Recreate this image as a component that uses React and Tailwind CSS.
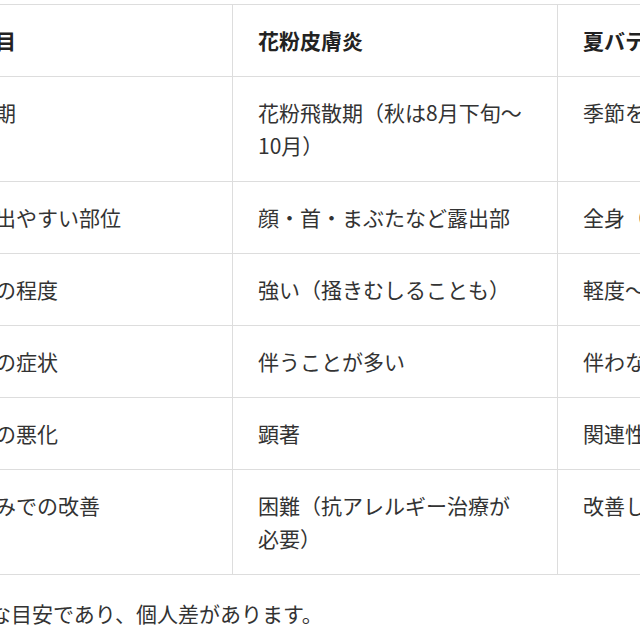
import React from "react";

const rows = [
  {
    item: "発症時期",
    pollen: "花粉飛散期（秋は8月下旬～10月）",
    summer: "季節を問わず（特に夏）",
  },
  {
    item: "症状が出やすい部位",
    pollen: "顔・首・まぶたなど露出部",
    summer: "全身（特に汗をかく部位）",
  },
  {
    item: "かゆみの程度",
    pollen: "強い（掻きむしることも）",
    summer: "軽度～中等度",
  },
  {
    item: "その他の症状",
    pollen: "伴うことが多い",
    summer: "伴わないことが多い",
  },
  {
    item: "外出後の悪化",
    pollen: "顕著",
    summer: "関連性は低い",
  },
  {
    item: "休養のみでの改善",
    pollen: "困難（抗アレルギー治療が必要）",
    summer: "改善しやすい",
  },
];

const cell =
  "border border-[#dddddd] pl-[25px] pr-[30px] py-[19px] align-top text-left";

const App = () => {
  return (
    <div
      className="w-[640px] h-[640px] overflow-hidden bg-white text-[#333333] text-[21px] leading-[33px]"
      style={{ fontFamily: '"Noto Sans CJK JP", "Noto Sans", sans-serif' }}
    >
      <div className="ml-[-94px] w-[976px] pt-1">
        <table className="table-fixed border-collapse w-[976px]">
          <colgroup>
            <col className="w-[326px]" />
            <col className="w-[325px]" />
            <col className="w-[325px]" />
          </colgroup>
          <thead>
            <tr>
              <th className={`${cell} font-bold text-[#222222]`}>比較項目</th>
              <th className={`${cell} font-bold text-[#222222]`}>花粉皮膚炎</th>
              <th className={`${cell} font-bold text-[#222222]`}>夏バテによる肌荒れ</th>
            </tr>
          </thead>
          <tbody>
            {rows.map((r) => (
              <tr key={r.item}>
                <td className={cell}>{r.item}</td>
                <td className={cell}>{r.pollen}</td>
                <td className={cell}>{r.summer}</td>
              </tr>
            ))}
          </tbody>
        </table>
        <p className="mt-[22px]">※一般的な目安であり、個人差があります。</p>
      </div>
    </div>
  );
};

export default App;
